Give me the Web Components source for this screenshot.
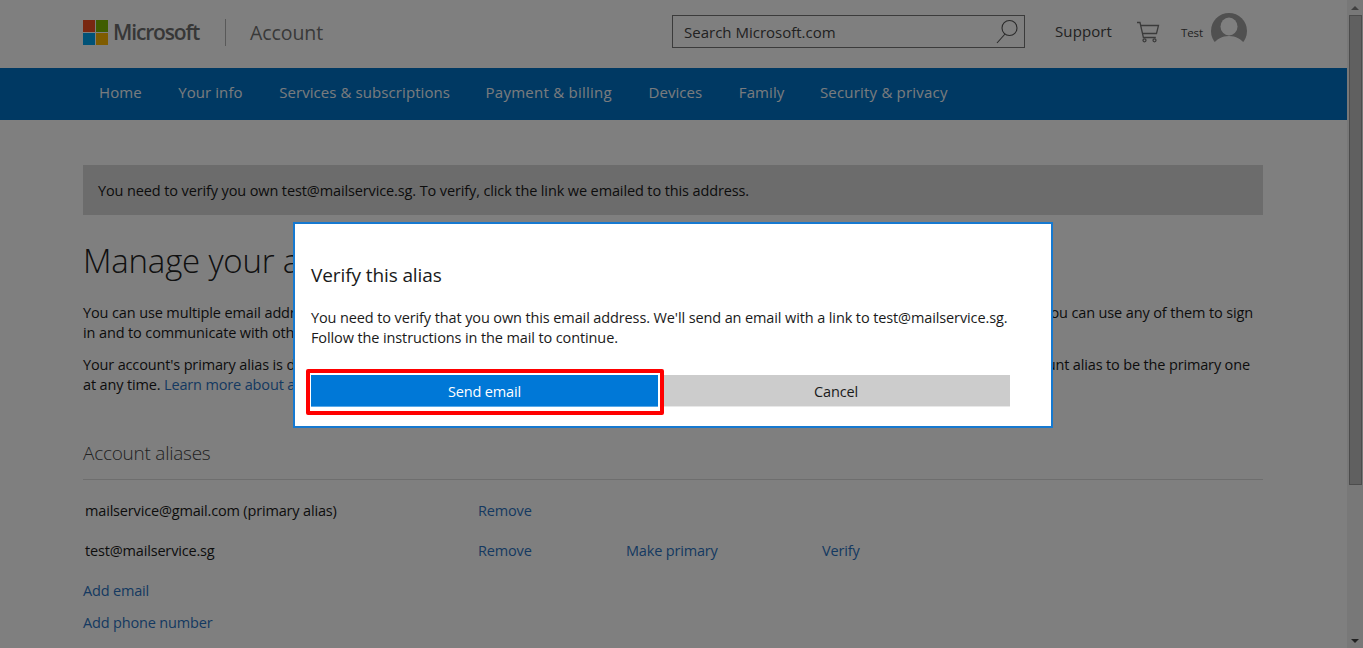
<!DOCTYPE html>
<html lang="en">
<head>
<meta charset="utf-8">
<title>Microsoft account</title>
<style>
  html, body { margin: 0; height: 100%; overflow: hidden; }
  body { display: flex; background: #fff; font-family: "Open Sans", "Noto Sans", sans-serif; color: #262626; }
</style>
</head>
<body>
<ms-page>
  <ms-header></ms-header>
  <ms-nav></ms-nav>
  <alias-content></alias-content>
</ms-page>
<page-scrollbar></page-scrollbar>
<dim-overlay></dim-overlay>
<verify-dialog></verify-dialog>

<script>
function define(name, html) {
  customElements.define(name, class extends HTMLElement {
    constructor() {
      super()
      this.attachShadow({ mode: 'open' }).innerHTML = html
    }
  })
}

define('ms-page', `
  <style>:host{display:block;flex:1;min-width:0;}</style>
  <slot></slot>
`)

define('ms-header', `
  <style>
    :host{display:flex;align-items:center;height:68px;padding:0 100px 4px 83px;box-sizing:border-box;}
    .logo{display:grid;grid-template-columns:12px 12px;grid-template-rows:12px 12px;gap:1px;margin-right:5px;}
    .word{font-size:21px;font-weight:600;letter-spacing:-1.15px;color:#6e6e6e;}
    .sep{width:1px;height:27px;background:#b3b3b3;margin:0 24px 0 26px;}
    .acct{font-size:19.5px;color:#737373;letter-spacing:-.1px;flex:1;}
    .search{display:flex;align-items:center;justify-content:space-between;width:353px;height:33px;box-sizing:border-box;border:1px solid #777;padding:0 5px 0 11px;margin-bottom:2px;font-size:15px;color:#444;}
    .search span{padding-top:1px;}
    .support{font-size:15px;margin-left:30px;letter-spacing:.1px;color:#444;padding-bottom:2px;}
    .cart{margin-left:24px;display:block;}
    .test{font-size:11.5px;margin-left:21px;letter-spacing:-.1px;color:#444;}
    .avatar{margin-left:8px;margin-bottom:2px;display:block;}
  </style>
  <div class="logo">
    <i style="background:#f25022"></i><i style="background:#7fba00"></i>
    <i style="background:#00a4ef"></i><i style="background:#ffb900"></i>
  </div>
  <span class="word">Microsoft</span>
  <span class="sep"></span>
  <span class="acct">Account</span>
  <div class="search">
    <span>Search Microsoft.com</span>
    <svg width="24" height="26" viewBox="0 0 24 26" fill="none" stroke="#555" stroke-width="1.1"><circle cx="14.5" cy="10" r="7.5"/><path d="M10 16 L2 25"/></svg>
  </div>
  <span class="support">Support</span>
  <svg class="cart" width="24" height="22" viewBox="0 0 24 22" fill="none" stroke="#777" stroke-width="1.3"><path d="M1 1.5 h3 l3.4 15 h12.4"/><path d="M4.6 4.5 H22.5 L20.5 12.5 H6.4"/><circle cx="8.5" cy="19.3" r="1.5"/><circle cx="18.5" cy="19.3" r="1.5"/></svg>
  <span class="test">Test</span>
  <svg class="avatar" width="36" height="36" viewBox="0 0 36 36"><defs><clipPath id="c"><path d="M0 0H36V31H34C30 26 25 23 18 23S6 26 2 31H0Z"/></clipPath></defs><circle cx="18" cy="18" r="18" fill="#a0a0a0" clip-path="url(#c)"/><ellipse cx="18" cy="13.5" rx="8.5" ry="9" fill="#fff"/></svg>
`)

define('ms-nav', `
  <style>
    :host{display:flex;height:52px;background:#0072c6;padding:0 83px 0 99px;gap:36.5px;align-items:center;font-size:15px;letter-spacing:.08px;color:#fff;}
    span{opacity:.95;white-space:nowrap;padding-bottom:5px;}
    .pay{letter-spacing:.25px;margin-left:-1px;}
    .sec{letter-spacing:.2px;margin-left:-1px;}
  </style>
  <span>Home</span><span>Your info</span><span>Services &amp; subscriptions</span><span class="pay">Payment &amp; billing</span><span>Devices</span><span>Family</span><span class="sec">Security &amp; privacy</span>
`)

define('alias-content', `
  <style>
    :host{display:block;padding:45px 84px 0 83px;font-size:14.5px;line-height:20px;letter-spacing:-.17px;color:#1a1a1a;}
    .banner{background:#d8d8d8;height:49px;line-height:50px;padding:1px 0 0 15px;letter-spacing:-.12px;}
    h1{font-size:33px;font-weight:300;line-height:44px;margin:24px 0 20px;letter-spacing:-.2px;color:#222;}
    p{margin:0 0 12px;letter-spacing:-.125px;white-space:nowrap;}
    p + p{letter-spacing:-.15px;}
    a{color:#2b73c2;text-decoration:none;}
    h2{font-size:19px;font-weight:300;line-height:24px;margin:46px 0 0;padding-bottom:14px;border-bottom:1px solid #ddd;color:#444;letter-spacing:-.25px;}
    .rows{margin:11px 0 4px;}
    .row{display:grid;grid-template-columns:395px 148px 196px 1fr;height:40px;align-items:center;}
    .row span:first-child{padding-left:2px;}
    .add{display:block;height:32px;line-height:32px;}
  </style>
  <div class="banner">You need to verify you own test@mailservice.sg. To verify, click the link we emailed to this address.</div>
  <h1>Manage your account aliases</h1>
  <p>You can use multiple email addresses and phone numbers to identify yourself with your Microsoft account. These are called account aliases, and you can use any of them to sign<br>in and to communicate with other people on Microsoft services.</p>
  <p>Your account's primary alias is displayed on your Microsoft devices and services, such as your Windows computer, and you can change which account alias to be the primary one<br>at any time. <a>Learn more about account aliases</a></p>
  <h2>Account aliases</h2>
  <div class="rows">
    <div class="row"><span>mailservice@gmail.com (primary alias)</span><a>Remove</a></div>
    <div class="row"><span>test@mailservice.sg</span><a>Remove</a><a>Make primary</a><a>Verify</a></div>
  </div>
  <a class="add">Add email</a>
  <a class="add">Add phone number</a>
`)

define('page-scrollbar', `
  <style>
    :host{display:flex;flex-direction:column;flex:none;width:16px;background:#f1f1f1;}
    .btn{height:15px;display:flex;align-items:center;justify-content:center;}
    .thumb{height:470px;margin:0 1px 0 2px;box-sizing:border-box;background:#c1c1c1;border:1px solid #999;}
    .track{flex:1;}
  </style>
  <div class="btn"><svg width="8" height="4" viewBox="0 0 8 4"><path d="M4 0L8 4H0Z" fill="#808080"/></svg></div>
  <div class="thumb"></div>
  <div class="track"></div>
  <div class="btn"><svg width="8" height="4" viewBox="0 0 8 4"><path d="M0 0H8L4 4Z" fill="#444"/></svg></div>
`)

define('dim-overlay', `
  <style>:host{position:fixed;inset:0;background:rgba(0,0,0,.5);}</style>
`)

define('verify-dialog', `
  <style>
    :host{position:fixed;left:293px;top:222px;width:760px;height:206px;box-sizing:border-box;background:#fff;border:2px solid #1679d0;padding:37px 16px 0;color:#1a1a1a;}
    h3{font-size:19px;font-weight:400;line-height:28px;margin:0 0 19px;letter-spacing:-.1px;}
    p{font-size:14.5px;line-height:20px;margin:0 0 27px;letter-spacing:-.115px;}
    .btns{display:flex;width:699px;}
    button{height:32px;box-sizing:border-box;border:0;padding:1px 0 0;font:inherit;font-size:14.5px;letter-spacing:-.17px;}
    .send{flex:0 0 347px;margin-right:4px;background:#0078d7;border-bottom:1px solid #5aa9e8;color:#fff;}
    .cancel{flex:1;background:#ccc;border-bottom:1px solid #e8e8e8;color:#1a1a1a;}
    .mark{position:absolute;left:11px;top:145px;width:358px;height:46px;box-sizing:border-box;border:4px solid #f00;border-radius:2px;}
  </style>
  <h3>Verify this alias</h3>
  <p>You need to verify that you own this email address. We'll send an email with a link to test@mailservice.sg.<br>Follow the instructions in the mail to continue.</p>
  <div class="btns"><button class="send">Send email</button><button class="cancel">Cancel</button></div>
  <div class="mark"></div>
`)
</script>
</body>
</html>
